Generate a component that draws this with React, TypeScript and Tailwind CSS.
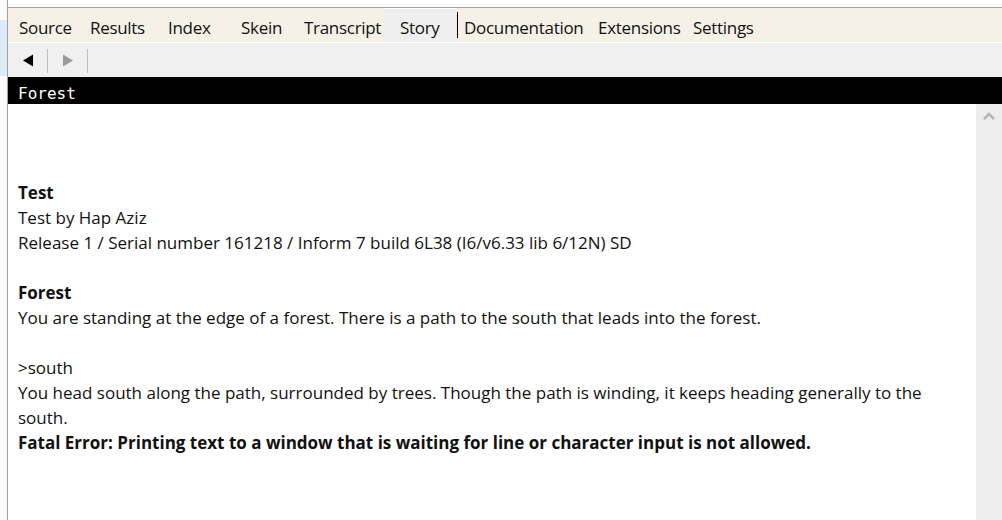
import React from 'react';

// box widths tuned so the labels land where the IDE draws them
const leftTabs = [
  { label: 'Source', w: 'w-[76px] pl-[11px]' },
  { label: 'Results', w: 'w-[78px] pl-[6px]' },
  { label: 'Index', w: 'w-[73px] pl-[6px]' },
  { label: 'Skein', w: 'w-[63px] pl-[6px]' },
  { label: 'Transcript', w: 'w-[87px] pl-[6px]' },
];

const rightTabs = [
  { label: 'Documentation', w: 'w-[134px] pl-[6px]' },
  { label: 'Extensions', w: 'w-[95px] pl-[6px]' },
  { label: 'Settings', w: 'w-[90px] pl-[6px]' },
];

function Tab({ label, w }: { label: string; w: string }) {
  return <div className={`flex h-full items-center whitespace-nowrap pt-[5px] ${w}`}>{label}</div>;
}

export default function App() {
  const sans = { fontFamily: '"Open Sans", "Noto Sans", sans-serif' };
  return (
    <div className="flex h-[520px] w-[1002px] overflow-hidden bg-white text-black" style={sans}>
      {/* left window edge */}
      <div className="flex w-[7px] flex-col bg-[#fafafa]">
        <div className="h-[20px]" />
        <div className="h-[56px] bg-[#dcebf7]" />
      </div>
      <div className="w-px bg-[#a0a0a0]" />

      <div className="flex flex-1 flex-col">
        <div className="h-[7px] bg-white" />
        <div className="h-px bg-[#a0a0a0]" />

        {/* tab bar */}
        <div className="flex h-[34px] items-stretch bg-[#f6f1e7] text-[17px] tracking-[-0.3px] text-[#111]">
          {leftTabs.map((t) => (
            <Tab key={t.label} label={t.label} w={t.w} />
          ))}
          <div className="flex h-full w-[72px] items-center border-t border-white bg-[#efefef] pl-[15px] pt-[4px]">
            Story
          </div>
          <div className="my-[4px] w-px bg-black" />
          {rightTabs.map((t) => (
            <Tab key={t.label} label={t.label} w={t.w} />
          ))}
        </div>
        <div className="h-px bg-white" />

        {/* toolbar */}
        <div className="flex h-[34px] items-center bg-[#f0f0f0] pt-[1px]">
          <div className="flex w-[39px] justify-center">
            <svg width="12" height="13" viewBox="0 0 12 13">
              <path d="M11 0.5 L1 6.5 L11 12.5 Z" fill="#000" />
            </svg>
          </div>
          <div className="h-[24px] w-px bg-[#bdbdbd]" />
          <div className="flex w-[39px] justify-center">
            <svg width="12" height="13" viewBox="0 0 12 13">
              <path d="M1 0.5 L11 6.5 L1 12.5 Z" fill="#9a9a9a" />
            </svg>
          </div>
          <div className="h-[24px] w-px bg-[#bdbdbd]" />
        </div>

        {/* status line */}
        <div
          className="flex h-[27px] items-center bg-black pl-[10px] pt-[6px] text-[16px] text-white"
          style={{ fontFamily: '"DejaVu Sans Mono", "Liberation Mono", monospace' }}
        >
          Forest
        </div>

        {/* story window */}
        <div className="flex flex-1">
          <div className="flex-1 pl-[10px] pt-[76px] text-[17px] leading-[25px] text-[#111]">
            <p className="font-bold">Test</p>
            <p>Test by Hap Aziz</p>
            <p>Release 1 / Serial number 161218 / Inform 7 build 6L38 (I6/v6.33 lib 6/12N) SD</p>
            <p>&nbsp;</p>
            <p className="font-bold">Forest</p>
            <p>You are standing at the edge of a forest. There is a path to the south that leads into the forest.</p>
            <p>&nbsp;</p>
            <p>&gt;south</p>
            <p className="pr-[40px]">
              You head south along the path, surrounded by trees. Though the path is winding, it keeps heading generally to the south.
            </p>
            <p className="font-bold">
              Fatal Error: Printing text to a window that is waiting for line or character input is not allowed.
            </p>
          </div>
          <div className="flex w-[26px] justify-center bg-[#ededed] pt-[8px]">
            <svg width="12" height="8" viewBox="0 0 12 8">
              <path d="M1 7 L6 2 L11 7" fill="none" stroke="#b5b5b5" strokeWidth="2.5" />
            </svg>
          </div>
        </div>
      </div>
    </div>
  );
}
